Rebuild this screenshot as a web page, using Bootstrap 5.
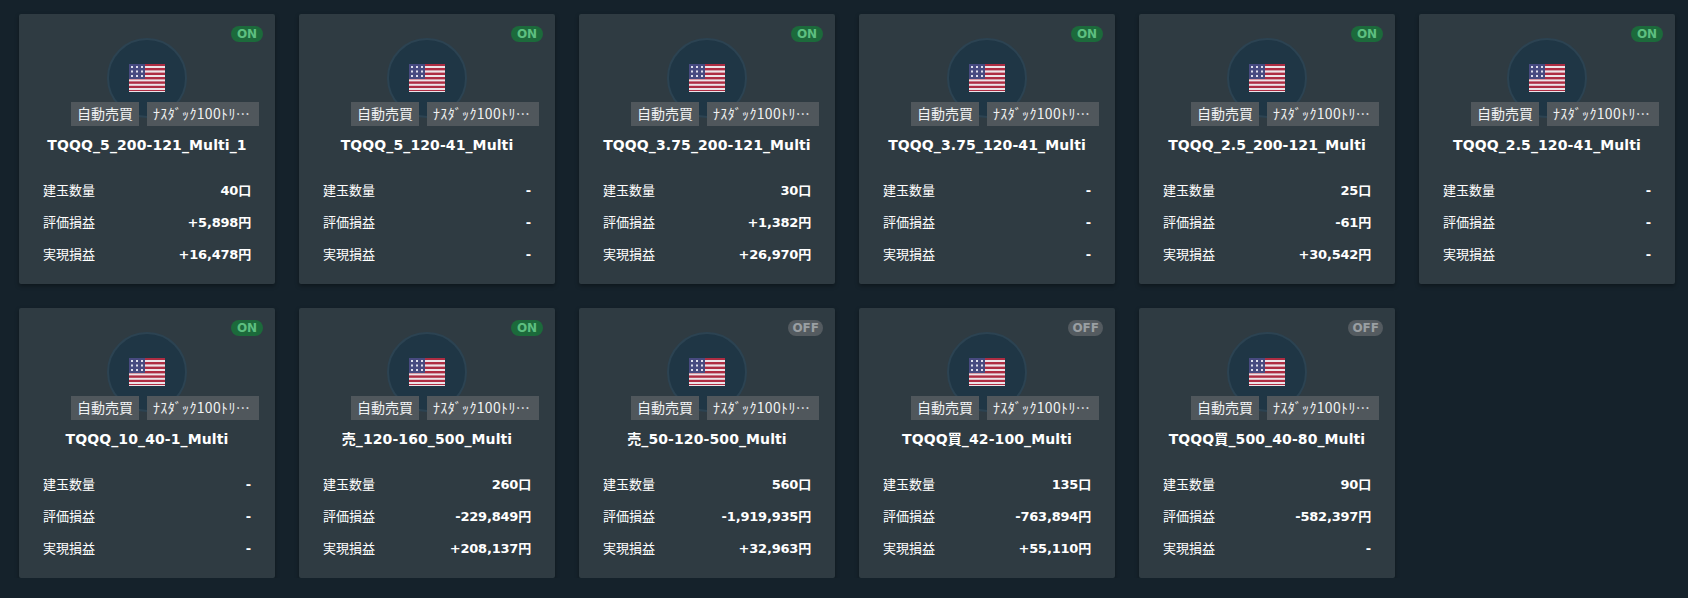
<!DOCTYPE html>
<html lang="ja"><head><meta charset="utf-8"><title>Bots</title>
<link href="https://cdn.jsdelivr.net/npm/bootstrap@5.3.0/dist/css/bootstrap.min.css" rel="stylesheet">
<style>
body{background:#15222b;color:#fff;font-family:"DejaVu Sans","Noto Sans CJK JP",sans-serif;overflow:hidden}
.wrap{padding:14px 0 0 19px;gap:24px;flex-wrap:wrap;width:1688px}
.bot{width:256px;height:270px;background:#2f3b42;border-radius:2px;box-shadow:0 2px 4px rgba(0,0,0,.35);position:relative;padding-top:24px}
.sw{position:absolute;top:12px;right:12px;height:16px;min-width:32px;text-align:center;padding:0 4px;border-radius:8px;font-size:12px;font-weight:700;line-height:16px;background:#1c6a3b;color:#5dbf80}
.sw.off{background:#545b60;color:#9a9fa2}
.disc{width:80px;height:80px;border-radius:50%;background:#1f3645;border:2px solid #2c4352;margin:0 auto}
.flagpic{display:block;position:absolute;left:20px;top:24px}
.tags{gap:8px;margin-top:-16px;padding-left:52px;position:relative}
.tg{height:24px;line-height:23px;background:#50575c;color:#f0f2f3;font-size:14px;font-family:"Noto Sans CJK JP",sans-serif;padding:0 6px;white-space:nowrap}
.tg.w{width:112px;letter-spacing:.35px;padding:0 6px;overflow:hidden}
.nm{font-size:14px;letter-spacing:.1px;font-weight:700;text-align:center;margin-top:9px;line-height:20px;height:20px}
.rows{padding:20px 24px 0}
.ln{height:32px;align-items:center}
.ln span:first-child{font-family:"Noto Sans CJK JP",sans-serif;font-size:13px;margin-bottom:2px}
.ln b{font-size:13px;letter-spacing:-.2px}
</style></head><body>
<div class="wrap d-flex" id="g"></div>
<script>
const U=`<svg class="flagpic" width="36" height="28" viewBox="0 0 36 28">
<rect width="36" height="28" fill="#ece4e8"/>
<g fill="#ae2c42"><rect y="0" width="36" height="2"/><rect y="4" width="36" height="2.4"/><rect y="8.6" width="36" height="2.4"/><rect y="13" width="36" height="2.4"/><rect y="17.4" width="36" height="2.4"/><rect y="21.8" width="36" height="2.2"/><rect y="26" width="36" height="1"/></g>
<rect width="16" height="15" fill="#474a80"/>
<g fill="#dfe0ec"><rect x="2" y="2" width="2" height="2"/><rect x="7" y="2" width="2" height="2"/><rect x="12" y="2" width="2" height="2"/><rect x="2" y="6.5" width="2" height="2"/><rect x="7" y="6.5" width="2" height="2"/><rect x="12" y="6.5" width="2" height="2"/><rect x="2" y="11" width="2" height="2"/><rect x="7" y="11" width="2" height="2"/><rect x="12" y="11" width="2" height="2"/></g></svg>`;
const D=[["TQQQ_5_200-121_Multi_1","40口","+5,898円","+16,478円",1],["TQQQ_5_120-41_Multi","-","-","-",1],["TQQQ_3.75_200-121_Multi","30口","+1,382円","+26,970円",1],["TQQQ_3.75_120-41_Multi","-","-","-",1],["TQQQ_2.5_200-121_Multi","25口","-61円","+30,542円",1],["TQQQ_2.5_120-41_Multi","-","-","-",1],["TQQQ_10_40-1_Multi","-","-","-",1],["売_120-160_500_Multi","260口","-229,849円","+208,137円",1],["売_50-120-500_Multi","560口","-1,919,935円","+32,963円",0],["TQQQ買_42-100_Multi","135口","-763,894円","+55,110円",0],["TQQQ買_500_40-80_Multi","90口","-582,397円","-",0]];
document.getElementById('g').innerHTML=D.map(d=>`<div class="bot"><span class="sw ${d[4]?'':'off'}">${d[4]?'ON':'OFF'}</span>
<div class="disc position-relative">${U}</div>
<div class="tags d-flex"><span class="tg">自動売買</span><span class="tg w">ﾅｽﾀﾞｯｸ100ﾄﾘ…</span></div>
<div class="nm">${d[0]}</div>
<div class="rows">${['建玉数量','評価損益','実現損益'].map((l,i)=>`<div class="ln d-flex justify-content-between"><span>${l}</span><b>${d[i+1]}</b></div>`).join('')}</div></div>`).join('');
</script>
<script src="https://cdn.jsdelivr.net/npm/bootstrap@5.3.0/dist/js/bootstrap.bundle.min.js"></script>
</body></html>
